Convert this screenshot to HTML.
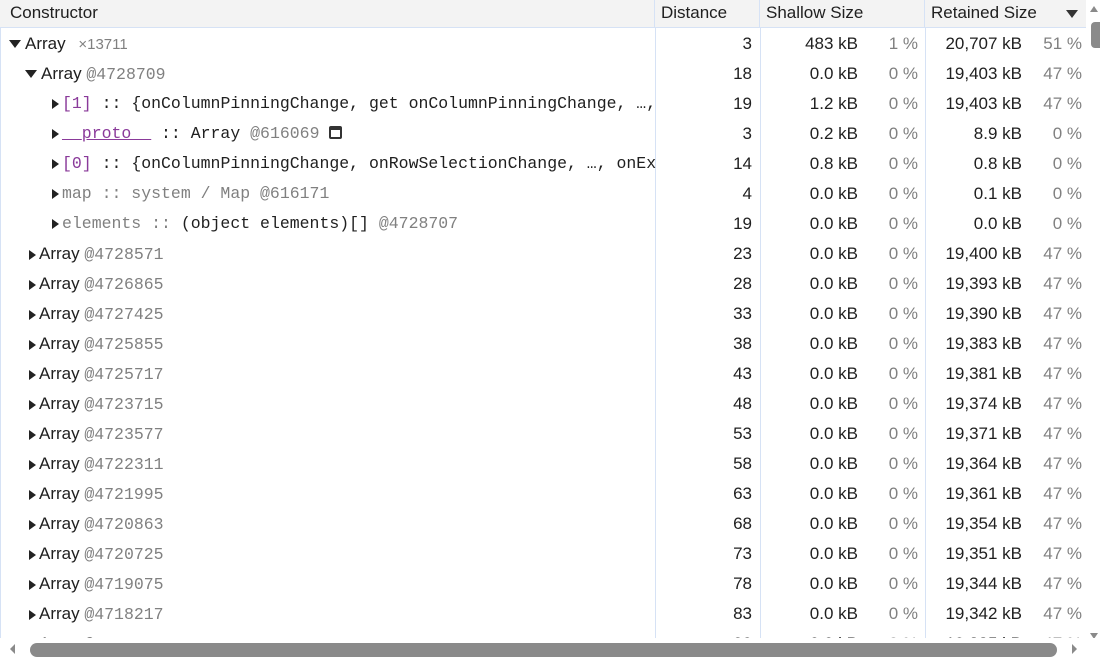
<!DOCTYPE html>
<html><head><style>
*{margin:0;padding:0;box-sizing:border-box}
body{width:1100px;height:662px;overflow:hidden;background:#fff;font-family:"Liberation Sans",sans-serif;font-size:17px;color:#202020;position:relative}
.hdr{position:absolute;top:0;left:0;width:1086px;height:28px;background:#f3f3f3;border-bottom:1px solid #d6e2f5}
.hdr div{position:absolute;top:0;height:27px;line-height:25px;padding-left:6px;border-right:1px solid #d6e2f5}
.vl{position:absolute;top:28px;height:612px;width:1px;background:#d6e2f5}
.row{position:absolute;left:0;width:1086px;height:30px;line-height:30px}
.row span{position:absolute;white-space:nowrap}
.n{text-align:right}
.g{color:#808080}
.m{font-family:"Liberation Mono",monospace;font-size:16.5px}
.p{color:#8a3a9a}
.tri{display:inline-block;width:0;height:0;border-top:5px solid transparent;border-bottom:5px solid transparent;border-left:7px solid #222;margin-right:3px;vertical-align:-1px}
.tri.d{border-left:6px solid transparent;border-right:6px solid transparent;border-top:8px solid #222;border-bottom:0;vertical-align:1px;margin-right:4px}
</style></head><body>
<div class="hdr">
<div style="left:0;width:655px;padding-left:10px">Constructor</div>
<div style="left:655px;width:105px">Distance</div>
<div style="left:760px;width:165px">Shallow Size</div>
<div style="left:925px;width:161px;border-right:none">Retained Size</div>
</div>
<div style="position:absolute;left:1066px;top:10px;border-left:6px solid transparent;border-right:6px solid transparent;border-top:8px solid #333"></div>
<div style="position:absolute;left:0;top:28px;width:1px;height:612px;background:#d6e2f5"></div>
<div class="vl" style="left:655px"></div>
<div class="vl" style="left:760px"></div>
<div class="vl" style="left:925px"></div>
<div style="position:absolute;left:1090px;top:6px;border-left:4px solid transparent;border-right:4px solid transparent;border-bottom:6px solid #8a8a8a"></div>
<div style="position:absolute;left:1091px;top:22px;width:9px;height:26px;background:#8a8a8a;border-radius:4px 0 0 4px"></div>
<div style="position:absolute;left:1090px;top:633px;border-left:4px solid transparent;border-right:4px solid transparent;border-top:6px solid #8a8a8a"></div>
<div id="rows"></div>
<div style="position:absolute;left:0;top:638px;width:1100px;height:24px;background:#fff"></div>
<div style="position:absolute;left:10px;top:644px;border-top:5px solid transparent;border-bottom:5px solid transparent;border-right:5px solid #8a8a8a"></div>
<div style="position:absolute;left:30px;top:643px;width:1027px;height:14px;background:#8a8a8a;border-radius:7px"></div>
<div style="position:absolute;left:1072px;top:644px;border-top:5px solid transparent;border-bottom:5px solid transparent;border-left:5px solid #8a8a8a"></div>
<script>
var rows=[
['<span style="left:9px"><i class="tri d"></i>Array <span class="g" style="position:static;margin-left:8px;font-size:15px">×13711</span></span>','3','483 kB','1 %','20,707 kB','51 %'],
['<span style="left:25px"><i class="tri d"></i>Array <span class="g m" style="position:static">@4728709</span></span>','18','0.0 kB','0 %','19,403 kB','47 %'],
['<span class="m" style="left:52px"><i class="tri"></i><span class="p" style="position:static">[1]</span> :: {onColumnPinningChange, get onColumnPinningChange, …,</span>','19','1.2 kB','0 %','19,403 kB','47 %'],
['<span class="m" style="left:52px"><i class="tri"></i><span class="p" style="position:static;text-decoration:underline">__proto__</span> :: Array <span class="g" style="position:static">@616069</span> <span style="position:static;display:inline-block;width:13px;height:13px;border:2px solid #333;border-top-width:4px;border-radius:2px;vertical-align:-1px"></span></span>','3','0.2 kB','0 %','8.9 kB','0 %'],
['<span class="m" style="left:52px"><i class="tri"></i><span class="p" style="position:static">[0]</span> :: {onColumnPinningChange, onRowSelectionChange, …, onEx</span>','14','0.8 kB','0 %','0.8 kB','0 %'],
['<span class="m g" style="left:52px"><i class="tri"></i>map :: system / Map @616171</span>','4','0.0 kB','0 %','0.1 kB','0 %'],
['<span class="m" style="left:52px"><i class="tri"></i><span class="g" style="position:static">elements ::</span> (object elements)[] <span class="g" style="position:static">@4728707</span></span>','19','0.0 kB','0 %','0.0 kB','0 %']];
var ids=[['4728571',23,'19,400'],['4726865',28,'19,393'],['4727425',33,'19,390'],['4725855',38,'19,383'],['4725717',43,'19,381'],['4723715',48,'19,374'],['4723577',53,'19,371'],['4722311',58,'19,364'],['4721995',63,'19,361'],['4720863',68,'19,354'],['4720725',73,'19,351'],['4719075',78,'19,344'],['4718217',83,'19,342'],['4717381',88,'19,335']];
ids.forEach(function(a){rows.push(['<span style="left:29px"><i class="tri"></i>Array <span class="g m" style="position:static">@'+a[0]+'</span></span>',''+a[1],'0.0 kB','0 %',a[2]+' kB','47 %'])});
var h='';
rows.forEach(function(r,i){
h+='<div class="row" style="top:'+(29+i*30)+'px">'+r[0]+
'<span class="n" style="right:334px">'+r[1]+'</span>'+
'<span class="n" style="right:228px">'+r[2]+'</span>'+
'<span class="n g" style="right:168px">'+r[3]+'</span>'+
'<span class="n" style="right:64px">'+r[4]+'</span>'+
'<span class="n g" style="right:4px">'+r[5]+'</span></div>';
});
document.getElementById('rows').innerHTML=h;
</script>
</body></html>
